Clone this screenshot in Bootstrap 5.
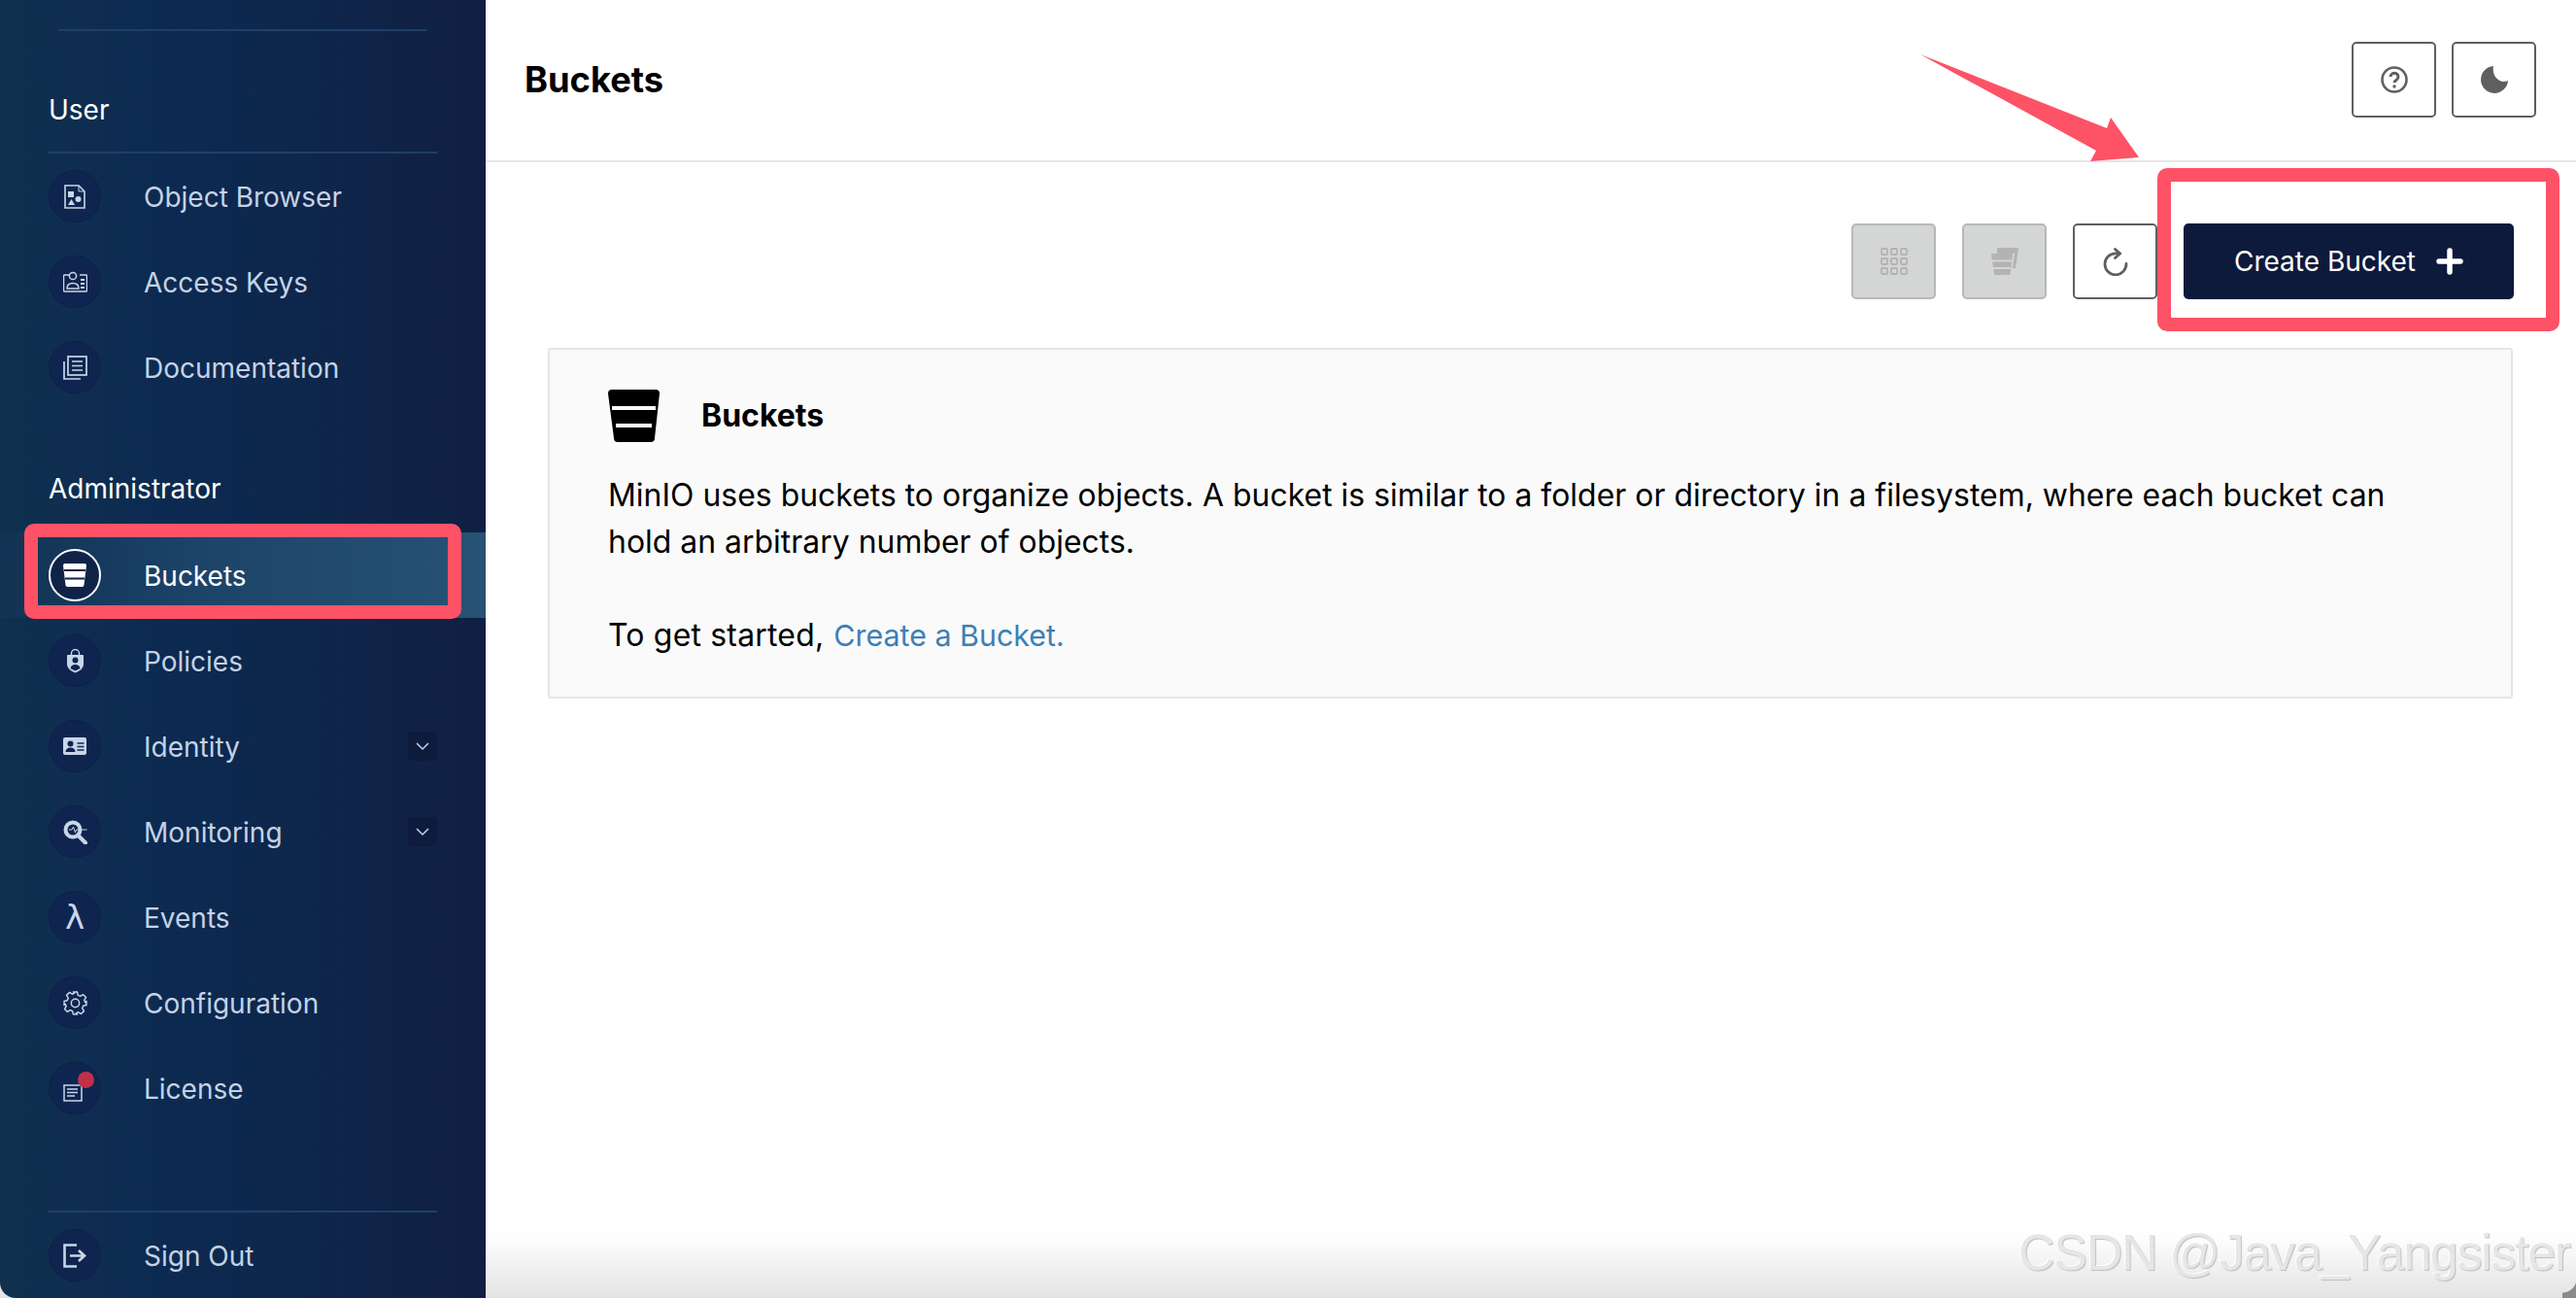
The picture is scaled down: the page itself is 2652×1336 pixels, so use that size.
<!DOCTYPE html>
<html lang="en">
<head>
<meta charset="utf-8">
<title>Buckets</title>
<link rel="stylesheet" href="https://cdn.jsdelivr.net/npm/bootstrap@5.3.0/dist/css/bootstrap.min.css">
<style>
html,body{height:100%}
body{font-family:Inter,"Liberation Sans",sans-serif;color:#000;background:#fff;overflow:hidden}
.app-shell{position:relative;width:2652px;height:1336px;overflow:hidden;background:linear-gradient(180deg,#fff 0,#fff 1255px,#fdfdfd 1275px,#e3e3e3 1336px)}
.side-panel{width:500px;height:1336px;flex:none;background:linear-gradient(90deg,#10304f 0,#0c2a51 36%,#0f2448 75%,#101f43 100%);border-bottom-left-radius:16px;color:#c5d2e5}
.top-rule{height:2px;margin:30px 60px 0;background:#1f3f68}
.group-head{color:#fff;font-size:28px;line-height:34px;padding:0 50px}
.group-head.first{margin-top:64px;padding-bottom:26px}
.group-rule{height:2px;margin:0 50px;background:#1f3f68}
.group-head.second{margin-top:64px;padding-bottom:28px}
.side-link{height:88px;padding:0 50px;color:#c5d2e5;font-size:28px;text-decoration:none}
.side-text{padding-top:1px}
.side-link.on{color:#fff;background:linear-gradient(90deg,rgba(39,83,118,.1) 0,#1c4468 40%,#275274 100%)}
.orb{position:relative;width:54px;height:54px;flex:none;margin-right:44px;border-radius:50%;background:#0f2550;border:1px solid #0d2045;color:#c9d6e8}
.side-link.on .orb{background:#0f2349;border:2px solid #fff;color:#fff}
.lambda-glyph{font-family:"DejaVu Sans",sans-serif;font-size:34px;line-height:1}
.red-dot{position:absolute;left:29px;top:9px;width:17px;height:17px;border-radius:50%;background:#c1304a}
.chev-box{width:30px;height:30px;background:#0d1b3d;border-radius:4px;color:#c5d2e5}
.main-pane{min-width:0}
.head-bar{height:167px;padding:0 41px 2px 40px;border-bottom:2px solid #e5e5e5}
.page-name{font-size:36.3px;font-weight:700;margin:2px 0 0;color:#000}
.sq-btn{width:87px;height:78px;padding:0;border:2px solid #5f5f5f;border-radius:5px;background:#fff;color:#5f5f5f}
.sq-btn:disabled,.sq-btn.disabled{background:#d4d5d5;border-color:#b8b8b8;color:#b3b3b3;opacity:1}
.tool-row{margin-top:63px;padding-right:64px;gap:27px}
.make-btn{width:340px;height:78px;padding:0;border:0;border-radius:5px;background:#0d1a3c;color:#fff;font-size:28px;gap:21px}
.make-btn:hover{background:#0d1a3c;color:#fff}
.info-box{margin:50px 65px 0 64px;height:361px;padding:41px 60px 0;background:#fafafa;border:2px solid #e5e5e5;border-radius:3px;color:#000}
.info-head{gap:43px;height:54px;margin-bottom:31px}
.info-title{font-size:32px;font-weight:700;margin:0}
.info-text{font-size:31.95px;line-height:48px;margin:0}
.info-start{letter-spacing:.2px}
.info-link{color:#3d7fb5;text-decoration:none;font-size:30.4px;margin-left:1px}
.mark-box{position:absolute;border:14px solid #fe5266;border-radius:10px;pointer-events:none}
.mark-a{left:25px;top:539px;width:450px;height:98px}
.mark-b{left:2221px;top:173px;width:414px;height:168px}
.mark-arrow{position:absolute;left:1970px;top:50px;width:240px;height:125px}
.water-mark{position:absolute;left:2078px;top:1259px;font-family:"Liberation Sans",sans-serif;font-size:52px;letter-spacing:-1.3px;line-height:60px;white-space:nowrap;color:#e6e6e6;text-shadow:1px 1px 1px #bdbdbd,-1px -1px 0 #fff}
.corner-bit{position:absolute;right:0;bottom:0;width:14px;height:20px;background:radial-gradient(circle at 0 0,transparent 14px,#8a8a8a 15px)}
</style>
</head>
<body>
<div class="app-shell d-flex">
  <aside class="side-panel d-flex flex-column">
    <div class="top-rule"></div>
    <div class="group-head first">User</div>
    <div class="group-rule"></div>
    <nav class="nav flex-column">
      <a class="side-link d-flex align-items-center" href="#"><span class="orb d-flex align-items-center justify-content-center">
        <svg width="22" height="25" viewBox="0 0 22 25" fill="none" stroke="currentColor" stroke-width="1.6"><path d="M1 1h14l6 6v17H1z"/><path d="M15 1v6h6" stroke-width="1"/><rect x="4" y="7" width="6" height="6" fill="currentColor" stroke="none"/><circle cx="14.5" cy="15" r="3" fill="currentColor" stroke="none"/><path d="M7.5 15l3.5 6H4z" fill="currentColor" stroke="none"/></svg>
      </span><span class="side-text">Object Browser</span></a>
      <a class="side-link d-flex align-items-center" href="#"><span class="orb d-flex align-items-center justify-content-center">
        <svg width="25" height="22" viewBox="0 0 25 22" fill="none" stroke="currentColor" stroke-width="1.5"><path d="M7 4H1.5a1 1 0 0 0-1 1v15a1 1 0 0 0 1 1h22a1 1 0 0 0 1-1V5a1 1 0 0 0-1-1H17"/><circle cx="10" cy="5" r="3.6"/><path d="M4 18c0-4 3-5.500 6-5.500s6 1.500 6 5.500z"/><path d="M18 9h4M18 13h4M18 17h4" stroke-width="2"/></svg>
      </span><span class="side-text">Access Keys</span></a>
      <a class="side-link d-flex align-items-center" href="#"><span class="orb d-flex align-items-center justify-content-center">
        <svg width="25" height="25" viewBox="0 0 25 25" fill="none" stroke="currentColor" stroke-width="1.7"><rect x="5" y="1" width="19" height="19"/><path d="M1 6v18h17M9 6h11M9 10.500h11M9 15h11"/></svg>
      </span><span class="side-text">Documentation</span></a>
    </nav>
    <div class="group-head second">Administrator</div>
    <nav class="nav flex-column">
      <a class="side-link on d-flex align-items-center" href="#"><span class="orb d-flex align-items-center justify-content-center">
        <svg width="24" height="24" viewBox="0 0 24 24" fill="currentColor"><path d="M0 2a2 2 0 0 1 2-2h20a2 2 0 0 1 2 2l-2.500 20a2 2 0 0 1-2 2h-15a2 2 0 0 1-2-2z"/><path d="M1 7h22M2 15.500h20" stroke="#0f2349" stroke-width="2"/></svg>
      </span><span class="side-text">Buckets</span></a>
      <a class="side-link d-flex align-items-center" href="#"><span class="orb d-flex align-items-center justify-content-center">
        <svg width="19" height="25" viewBox="0 0 19 25"><path d="M5.500 6V4.500a4 4 0 0 1 8 0V6" fill="none" stroke="currentColor" stroke-width="1.400"/><path d="M1 7q0-1 1-1h15q1 0 1 1v9q0 5-8.500 8.500Q1 21 1 16z" fill="currentColor"/><circle cx="9.500" cy="11.500" r="3" fill="#0f2550"/><path d="M4.500 20c.500-3 2.500-4 5-4s4.500 1 5 4l-5 2.500z" fill="#0f2550"/></svg>
      </span><span class="side-text">Policies</span></a>
      <a class="side-link d-flex align-items-center" href="#"><span class="orb d-flex align-items-center justify-content-center">
        <svg width="24" height="18" viewBox="0 0 24 18"><rect width="24" height="18" rx="2" fill="currentColor"/><circle cx="7.500" cy="6.500" r="3" fill="#0f2550"/><path d="M2.500 15c0-3 2-4.500 5-4.500s5 1.500 5 4.500z" fill="#0f2550"/><path d="M14.500 6h7M14.500 9.500h7M14.500 13h7" stroke="#0f2550" stroke-width="1.500"/></svg>
      </span><span class="side-text flex-grow-1">Identity</span><span class="chev-box d-flex align-items-center justify-content-center"><svg width="14" height="9" viewBox="0 0 14 9" fill="none" stroke="currentColor" stroke-width="1.500"><path d="M1 1l6 6 6-6"/></svg></span></a>
      <a class="side-link d-flex align-items-center" href="#"><span class="orb d-flex align-items-center justify-content-center">
        <svg width="25" height="25" viewBox="0 0 25 25" fill="none" stroke="currentColor"><circle cx="10" cy="10" r="7.500" stroke-width="4"/><path d="M15.500 16l7.500 7.500" stroke-width="4" stroke-linecap="round"/><path d="M6 10h3l1.500-3 2 6 1-3h11" stroke-width="1"/></svg>
      </span><span class="side-text flex-grow-1">Monitoring</span><span class="chev-box d-flex align-items-center justify-content-center"><svg width="14" height="9" viewBox="0 0 14 9" fill="none" stroke="currentColor" stroke-width="1.500"><path d="M1 1l6 6 6-6"/></svg></span></a>
      <a class="side-link d-flex align-items-center" href="#"><span class="orb d-flex align-items-center justify-content-center"><span class="lambda-glyph">λ</span></span><span class="side-text">Events</span></a>
      <a class="side-link d-flex align-items-center" href="#"><span class="orb d-flex align-items-center justify-content-center">
        <svg width="25" height="25" viewBox="0 0 24 24" fill="none" stroke="currentColor" stroke-width="1.400" stroke-linejoin="round"><circle cx="12" cy="12" r="4"/><path d="M10 1h4l.700 3.200 2.300 1 2.800-1.700 2.800 2.800-1.700 2.800 1 2.300L23 10v4l-3.100.700-1 2.300 1.700 2.800-2.800 2.800-2.800-1.700-2.300 1L14 23h-4l-.700-3.100-2.300-1-2.800 1.700-2.800-2.800 1.700-2.800-1-2.300L1 14v-4l3.100-.700 1-2.300-1.700-2.800 2.800-2.800 2.800 1.700 2.300-1z"/></svg>
      </span><span class="side-text">Configuration</span></a>
      <a class="side-link d-flex align-items-center" href="#"><span class="orb d-flex align-items-center justify-content-center">
        <svg class="me-1 mt-2" width="20" height="19" viewBox="0 0 20 19" fill="none" stroke="currentColor" stroke-width="1.500"><path d="M1 2h18v16H1z"/><path d="M4 6h11M4 9.500h11M4 13h8"/></svg>
        <span class="red-dot"></span>
      </span><span class="side-text">License</span></a>
    </nav>
    <div class="group-rule mt-auto"></div>
    <a class="side-link d-flex align-items-center" href="#"><span class="orb d-flex align-items-center justify-content-center">
      <svg width="25" height="25" viewBox="0 0 25 25" fill="none" stroke="currentColor" stroke-width="2.600"><path d="M14 1.500H1.500v22H14"/><path d="M7 12.500h14M16 7l6 5.500-6 5.500" /></svg>
    </span><span class="side-text">Sign Out</span></a>
  </aside>

  <main class="main-pane flex-grow-1 d-flex flex-column">
    <header class="head-bar d-flex align-items-center justify-content-between">
      <h1 class="page-name">Buckets</h1>
      <div class="d-flex gap-3">
        <button class="btn sq-btn d-flex align-items-center justify-content-center" type="button" aria-label="Help">
          <svg width="28" height="28" viewBox="0 0 28 28" fill="none" stroke="currentColor" stroke-width="2.600"><circle cx="14" cy="14" r="12.500"/><path d="M10 11a4 3.800 0 1 1 6.200 3.200c-1.300.9-2.200 1.500-2.200 2.800" stroke-width="3"/><circle cx="14" cy="21" r="1.700" fill="currentColor" stroke="none"/></svg>
        </button>
        <button class="btn sq-btn d-flex align-items-center justify-content-center" type="button" aria-label="Theme">
          <svg width="28" height="28" viewBox="0 0 28 28" fill="currentColor"><path d="M13 0A14 14 0 1 0 28 15C20 19 11 11 13 0z"/></svg>
        </button>
      </div>
    </header>
    <div class="tool-row d-flex justify-content-end">
      <button class="btn sq-btn disabled d-flex align-items-center justify-content-center" type="button" aria-label="Select">
        <svg width="28" height="28" viewBox="0 0 28 28" fill="none" stroke="currentColor" stroke-width="1.800"><rect x="1" y="1" width="6" height="6" rx="1"/><rect x="11" y="1" width="6" height="6" rx="1"/><rect x="21" y="1" width="6" height="6" rx="1"/><rect x="1" y="11" width="6" height="6" rx="1"/><rect x="11" y="11" width="6" height="6" rx="1"/><rect x="21" y="11" width="6" height="6" rx="1"/><rect x="1" y="21" width="6" height="6" rx="1"/><rect x="11" y="21" width="6" height="6" rx="1"/><rect x="21" y="21" width="6" height="6" rx="1"/></svg>
      </button>
      <button class="btn sq-btn disabled d-flex align-items-center justify-content-center" type="button" aria-label="Replicate">
        <svg width="28" height="28" viewBox="0 0 28 28" fill="currentColor"><path d="M6 1q0-1 1-1h20q1 0 1 1l-3 20h-3l2-15H6z"/><path d="M0 7q0-1 1-1h20q1 0 1 1l-2.500 20q0 1-1 1H4q-1 0-1-1z"/><path d="M1 13.500h20M2 21h18" stroke="#d4d5d5" stroke-width="2"/></svg>
      </button>
      <button class="btn sq-btn d-flex align-items-center justify-content-center" type="button" aria-label="Refresh">
        <svg width="26" height="29" viewBox="0 0 26 29" fill="none" stroke="currentColor" stroke-width="2.800" stroke-linecap="round"><path d="M24 16.500A11 11 0 1 1 13 5.800h4"/><path d="M12.500 1.500l5 4.500-5 4.500"/></svg>
      </button>
      <button class="btn make-btn d-flex align-items-center justify-content-center" type="button">Create Bucket
        <svg width="28" height="28" viewBox="0 0 28 28" fill="none" stroke="currentColor" stroke-width="5.500" stroke-linecap="round"><path d="M14 3v22M3 14h22"/></svg>
      </button>
    </div>
    <section class="card info-box">
      <div class="info-head d-flex align-items-center">
        <svg width="53" height="54" viewBox="0 0 53 54"><path d="M0 4a4 4 0 0 1 4-4h45a4 4 0 0 1 4 4l-5 46a4 4 0 0 1-4 4H10a4 4 0 0 1-4-4z" fill="#000"/><path d="M4 19h45M8 37h37" stroke="#fafafa" stroke-width="4"/></svg>
        <h2 class="info-title">Buckets</h2>
      </div>
      <p class="info-text">MinIO uses buckets to organize objects. A bucket is similar to a folder or directory in a filesystem, where each bucket can hold an arbitrary number of objects.</p>
      <p class="info-text mt-5"><span class="info-start">To get started,</span> <a class="info-link" href="#">Create a Bucket.</a></p>
    </section>
  </main>

  <div class="mark-box mark-a"></div>
  <div class="mark-box mark-b"></div>
  <svg class="mark-arrow" viewBox="0 0 240 125"><polygon points="7,6 199,82 203,71 232,112 182,116 188,105" fill="#fe5266"/></svg>
  <div class="water-mark">CSDN @Java_Yangsister</div>
  <div class="corner-bit"></div>
</div>
<script src="https://cdn.jsdelivr.net/npm/bootstrap@5.3.0/dist/js/bootstrap.bundle.min.js"></script>
</body>
</html>
